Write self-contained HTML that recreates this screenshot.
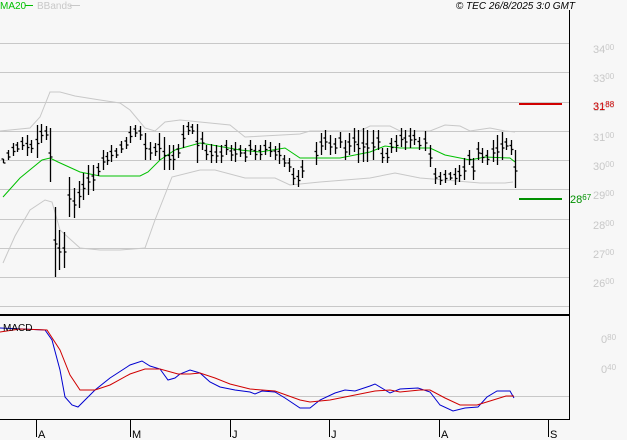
<!DOCTYPE html>
<html><head><meta charset="utf-8"><style>
html,body{margin:0;padding:0;background:#f7f7f7;}
svg{display:block;font-family:"Liberation Sans",sans-serif;}
.lb{fill:#c8c8c8;font-size:11px;}
.sm{font-size:8px;}
</style></head><body>
<svg width="627" height="440" viewBox="0 0 627 440">
<rect width="627" height="440" fill="#f7f7f7"/>
<g stroke="#c8c8c8" stroke-width="1">
<line x1="0" y1="43.5" x2="569" y2="43.5"/><line x1="0" y1="72.5" x2="569" y2="72.5"/>
<line x1="0" y1="102.5" x2="569" y2="102.5"/><line x1="0" y1="131.5" x2="569" y2="131.5"/>
<line x1="0" y1="160.5" x2="569" y2="160.5"/><line x1="0" y1="189.5" x2="569" y2="189.5"/>
<line x1="0" y1="219.5" x2="569" y2="219.5"/><line x1="0" y1="248.5" x2="569" y2="248.5"/>
<line x1="0" y1="277.5" x2="569" y2="277.5"/><line x1="0" y1="306.5" x2="569" y2="306.5"/>
<line x1="0" y1="396.5" x2="569" y2="396.5"/>
</g>
<g class="lb">
<text x="593" y="53">34<tspan class="sm" dy="-3">00</tspan></text>
<text x="593" y="82">33<tspan class="sm" dy="-3">00</tspan></text>
<text x="593" y="111">32<tspan class="sm" dy="-3">00</tspan></text>
<text x="593" y="141">31<tspan class="sm" dy="-3">00</tspan></text>
<text x="593" y="170">30<tspan class="sm" dy="-3">00</tspan></text>
<text x="593" y="199">29<tspan class="sm" dy="-3">00</tspan></text>
<text x="593" y="229">28<tspan class="sm" dy="-3">00</tspan></text>
<text x="593" y="258">27<tspan class="sm" dy="-3">00</tspan></text>
<text x="593" y="287">26<tspan class="sm" dy="-3">00</tspan></text>
<text x="601" y="343">0<tspan class="sm" dy="-3">80</tspan></text>
<text x="601" y="373">0<tspan class="sm" dy="-3">40</tspan></text>
</g>
<!-- bands -->
<polyline fill="none" stroke="#c8c8c8" points="0,131 30,128 40,117 50,92 60,92 75,96 100,100 120,103 130,110 145,128 155,131 165,122 180,120 230,125 245,137 300,134 310,131 360,131 370,126 390,126 400,131 430,131 445,125 460,126 470,131 490,128 505,131 515,132"/>
<polyline fill="none" stroke="#c8c8c8" points="3,263 15,236 30,210 45,200 52,202 60,230 80,248 100,250 120,250 145,248 155,220 172,177 200,170 215,170 245,178 275,178 290,185 320,182 370,178 395,173 420,178 445,180 480,183 505,183 513,182"/>
<polyline fill="none" stroke="#00c000" points="3,197 20,178 42,160 50,158 58,162 80,172 100,176 140,176 148,172 160,160 175,150 200,143 212,145 240,150 260,152 285,148 300,158 315,158 340,158 370,152 385,146 400,148 430,148 445,155 470,160 485,157 510,158 515,162"/>
<g stroke="#000" stroke-width="1.3" id="bars"></g>
<line x1="519" y1="104" x2="562" y2="104" stroke="#d00000" stroke-width="2"/>
<text x="593" y="110" fill="#d00000" font-size="11">31<tspan font-size="8" dy="-3">88</tspan></text>
<line x1="519" y1="199" x2="562" y2="199" stroke="#009000" stroke-width="2"/>
<text x="570" y="203" fill="#009000" font-size="11">28<tspan font-size="8" dy="-3">67</tspan></text>
<!-- MACD -->
<polyline fill="none" stroke="#0000d0" points="0,328 45,330 52,340 60,370 65,397 72,405 78,407 95,390 110,378 130,365 142,361 150,366 160,369 168,380 175,378 180,374 190,370 200,373 210,382 220,387 235,390 250,392 255,394 262,391 275,392 285,398 300,408 310,408 320,400 335,393 345,390 355,391 370,386 375,384 390,393 400,389 418,388 430,392 440,405 453,411 465,408 478,407 487,397 497,391 510,391 514,398"/>
<polyline fill="none" stroke="#d00000" points="0,332 20,329 47,330 60,350 70,375 80,390 95,390 110,385 130,374 145,369 160,369 178,374 190,374 200,373 215,378 230,384 250,389 275,391 300,400 310,402 330,400 350,396 375,391 390,390 400,392 420,390 430,390 445,398 460,405 477,405 490,401 506,396 514,396"/>
<text x="3" y="331" font-size="10" fill="#000">MACD</text>
<line x1="0" y1="315" x2="569" y2="315" stroke="#000" stroke-width="2"/>
<line x1="569.5" y1="10" x2="569.5" y2="420" stroke="#000"/>
<line x1="0" y1="419.5" x2="570" y2="419.5" stroke="#000"/>
<g stroke="#000"><line x1="36.5" y1="419" x2="36.5" y2="437"/><line x1="130.5" y1="419" x2="130.5" y2="437"/><line x1="230.5" y1="419" x2="230.5" y2="437"/><line x1="329.5" y1="419" x2="329.5" y2="437"/><line x1="439.5" y1="419" x2="439.5" y2="437"/><line x1="548.5" y1="419" x2="548.5" y2="437"/></g>
<g font-size="11" fill="#000"><text x="38" y="438">A</text><text x="132" y="438">M</text><text x="232" y="438">J</text><text x="331" y="438">J</text><text x="441" y="438">A</text><text x="550" y="438">S</text></g>
<text x="0" y="9" font-size="10" fill="#00c000">MA20</text><line x1="25" y1="5.5" x2="33" y2="5.5" stroke="#00c000"/>
<text x="37" y="9" font-size="10" fill="#c8c8c8">BBands</text><line x1="70" y1="5.5" x2="80" y2="5.5" stroke="#c8c8c8"/>
<text x="575" y="9" font-size="10" font-style="italic" text-anchor="end" fill="#000">© TEC 26/8/2025 3:0 GMT</text>
</svg>
<script>
var d=[[3,159,163],[8,150,160],[13,143,156],[17,142,152],[22,137,150],[27,135,156],[31,140,153],[37,125,158],[41,124,143],[46,126,140],[50,128,182],[55,207,277],[59,230,270],[64,232,268],[69,177,217],[74,188,218],[79,181,208],[83,173,200],[88,165,195],[93,165,191],[98,163,176],[103,150,170],[107,152,165],[111,145,162],[116,148,158],[121,141,153],[126,137,149],[130,126,143],[135,125,137],[140,126,140],[145,133,160],[150,142,160],[155,143,156],[159,133,160],[164,137,170],[169,145,170],[173,145,170],[178,144,158],[183,125,148],[188,122,135],[192,124,134],[197,124,163],[202,132,150],[206,145,160],[211,144,163],[216,145,163],[221,145,163],[226,140,155],[231,145,161],[235,142,162],[240,145,157],[245,148,162],[250,140,155],[255,145,160],[260,145,160],[265,140,155],[270,142,157],[275,146,160],[279,143,164],[284,155,167],[289,158,172],[293,168,185],[298,170,187],[302,160,178],[316,142,165],[321,133,155],[325,130,150],[330,135,155],[335,138,154],[340,132,148],[345,140,160],[349,133,155],[354,128,152],[358,130,163],[363,128,162],[367,130,162],[373,130,160],[378,130,150],[382,148,163],[387,148,163],[391,138,153],[396,135,152],[401,128,147],[405,130,150],[410,128,148],[414,130,145],[419,137,150],[425,131,151],[430,145,167],[435,168,184],[440,172,185],[445,170,183],[450,172,180],[455,168,185],[459,165,182],[464,158,180],[469,150,165],[473,158,180],[478,142,160],[482,148,163],[487,150,165],[493,140,162],[497,135,165],[502,132,160],[506,138,150],[511,140,155],[515,150,188]];
var g=document.getElementById('bars'),s='';
d.forEach(function(b){var x=b[0]+.5,m=(b[1]+b[2])/2;s+='<line x1="'+x+'" y1="'+b[1]+'" x2="'+x+'" y2="'+b[2]+'"/><line x1="'+(x-2)+'" y1="'+(m-2)+'" x2="'+x+'" y2="'+(m-2)+'"/><line x1="'+x+'" y1="'+(m+2)+'" x2="'+(x+2)+'" y2="'+(m+2)+'"/>';});
g.innerHTML=s;
</script>
</body></html>
